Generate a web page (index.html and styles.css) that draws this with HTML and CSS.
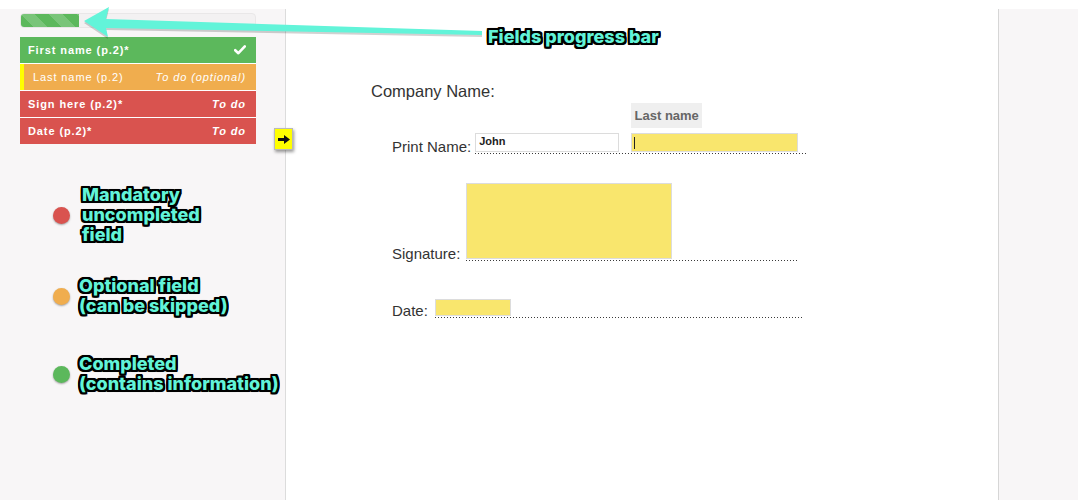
FILE: index.html
```html
<!DOCTYPE html>
<html>
<head>
<meta charset="utf-8">
<link rel="stylesheet" href="styles.css">
</head>
<body>
<div class="app">
  <aside class="sidebar">
    <div class="progress"><div class="progress-fill" style="width:25%"></div></div>
    <ul class="fields">
      <li class="field done">
        <span class="name">First name (p.2)*</span>
        <svg class="check" width="12" height="10" viewBox="0 0 12 10"><path d="M1.2 5.2 L4.4 8.2 L10.8 1.4" fill="none" stroke="#fff" stroke-width="2.6" stroke-linecap="round" stroke-linejoin="round"/></svg>
      </li>
      <li class="field optional current">
        <span class="name">Last name (p.2)</span>
        <span class="status">To do (optional)</span>
      </li>
      <li class="field todo">
        <span class="name">Sign here (p.2)*</span>
        <span class="status">To do</span>
      </li>
      <li class="field todo">
        <span class="name">Date (p.2)*</span>
        <span class="status">To do</span>
      </li>
    </ul>
    <div class="legend">
      <div class="legend-item item-mandatory">
        <span class="dot dot-red"></span>
        <span class="callout-text">Mandatory<br>uncompleted<br>field</span>
      </div>
      <div class="legend-item item-optional">
        <span class="dot dot-orange"></span>
        <span class="callout-text">Optional field<br>(can be skipped)</span>
      </div>
      <div class="legend-item item-completed">
        <span class="dot dot-green"></span>
        <span class="callout-text">Completed<br>(contains information)</span>
      </div>
    </div>
  </aside>
  <main class="document">
    <div class="company">Company Name:</div>
    <div class="doc-row row-print">
      <span class="label">Print Name:</span>
      <div class="line line-print">
        <div class="input filled">John</div>
        <div class="input active">
          <span class="tooltip">Last name</span>
          <span class="cursor"></span>
        </div>
      </div>
    </div>
    <div class="doc-row row-sign">
      <span class="label">Signature:</span>
      <div class="line line-sign">
        <div class="input sign-box"></div>
      </div>
    </div>
    <div class="doc-row row-date">
      <span class="label">Date:</span>
      <div class="line line-date">
        <div class="input date-box"></div>
      </div>
    </div>
  </main>
  <div class="rightpanel"></div>
</div>

<button class="next-btn" aria-label="Next field">
  <svg width="12" height="9" viewBox="0 0 12 9"><rect x="0" y="3" width="6.5" height="3" fill="#111"/><polygon points="6,0 12,4.5 6,9" fill="#111"/></svg>
</button>

<svg class="callout-arrow" width="1078" height="60" viewBox="0 0 1078 60">
  <polygon class="arrow-shadow" points="84,23 109,9 106,21 482,33 482,37 106,30 108,39"/>
  <polygon class="arrow-body" points="84,21 109,7 106,19 482,31 482,35 106,28 108,37"/>
</svg>
<div class="callout-label callout-text">Fields progress bar</div>
</body>
</html>
```

FILE: styles.css
```css
* { box-sizing: border-box; }
html, body { margin: 0; padding: 0; background: #fff; }
body {
  width: 1078px;
  height: 500px;
  overflow: hidden;
  position: relative;
  font-family: "Liberation Sans", Arial, sans-serif;
}
.app {
  display: flex;
  height: 500px;
}
.sidebar {
  width: 286px;
  margin-top: 9px;
  background: #f8f6f7;
  border-right: 1px solid #dcdcdc;
  padding: 4px 29px 0 20px;
}
.document {
  flex: 1;
  background: #fff;
  padding: 82px 0 0 85px;
  color: #333;
}
.rightpanel {
  width: 80px;
  margin-top: 9px;
  background: #f8f6f7;
  border-left: 1px solid #d6d6d6;
}

/* progress */
.progress {
  height: 15px;
  background: #f3f1f2;
  border: 1px solid #e9e7e8;
  border-radius: 4px;
  overflow: hidden;
}
.progress-fill {
  margin: -1px 0 0 -1px;
  height: 15px;
  background-color: #5cb85c;
  background-image: linear-gradient(45deg, rgba(255,255,255,.18) 25%, transparent 25%, transparent 50%, rgba(255,255,255,.18) 50%, rgba(255,255,255,.18) 75%, transparent 75%, transparent);
  background-size: 28px 28px;
}

/* field list */
.fields {
  list-style: none;
  margin: 9px 0 0 0;
  padding: 0;
  display: flex;
  flex-direction: column;
  gap: 1px;
  background: #fff;
}
.field {
  height: 26px;
  display: flex;
  align-items: center;
  justify-content: space-between;
  padding: 0 10px 0 8px;
  color: #fff;
  font-size: 11px;
  font-weight: bold;
  letter-spacing: 0.9px;
}
.field .status { font-style: italic; }
.done { background: #5cb85c; }
.todo { background: #d9534f; }
.optional {
  background: #f0ad4e;
  font-weight: normal;
}
.current {
  border-left: 4px solid #ffff00;
  padding-left: 9px;
}

/* legend */
.legend { display: flex; flex-direction: column; }
.legend-item {
  display: flex;
  align-items: center;
}
.item-mandatory { margin-top: 41px; gap: 12px; }
.item-optional { margin-top: 31px; gap: 9px; }
.item-completed { margin-top: 38px; gap: 9px; }
.dot {
  width: 17px;
  height: 17px;
  border-radius: 50%;
  margin-left: 33px;
  flex: none;
  box-shadow: 0 1px 2px rgba(0,0,0,.35);
}
.dot-red { background: #d9534f; }
.dot-orange { background: #f0ad4e; }
.dot-green { background: #5cb85c; }

.callout-text {
  font-family: Inter, "Noto Sans", sans-serif;
  font-weight: 800;
  font-size: 18px;
  line-height: 20px;
  letter-spacing: 0;
  white-space: nowrap;
  color: #62f4d9;
  text-shadow:
    -2px -2px 0 #000, 0 -2px 0 #000, 2px -2px 0 #000, 2px 0 0 #000,
    2px 2px 0 #000, 0 2px 0 #000, -2px 2px 0 #000, -2px 0 0 #000,
    -1px -2px 0 #000, 1px -2px 0 #000, -1px 2px 0 #000, 1px 2px 0 #000,
    -2px -1px 0 #000, 2px -1px 0 #000, -2px 1px 0 #000, 2px 1px 0 #000,
    0 0 3px #000;
}

/* document */
.company {
  font-size: 16.5px;
  line-height: 19px;
}
.doc-row {
  display: flex;
  align-items: flex-end;
  margin-left: 21px;
}
.label {
  font-size: 15px;
  line-height: 15px;
  white-space: nowrap;
}
.line {
  display: flex;
  align-items: flex-end;
  padding-bottom: 2px;
  background-image: linear-gradient(to right, #3a3a3a 0, #3a3a3a 1.5px, transparent 1.5px);
  background-size: 3px 1.5px;
  background-repeat: repeat-x;
  background-position: left bottom;
}
.row-print { margin-top: 32px; gap: 4px; }
.row-sign { margin-top: 29px; gap: 6px; }
.row-date { margin-top: 38px; gap: 7px; }
.line-print { width: 332px; gap: 12px; }
.line-sign { width: 332px; }
.line-date { width: 368px; }

.input {
  position: relative;
  height: 19px;
  border: 1px solid #dcdcdc;
  background: #f9e66d;
}
.filled {
  width: 144px;
  background: #fff;
  font-size: 11px;
  font-weight: bold;
  color: #222;
  padding: 1px 0 0 3px;
}
.active { width: 167px; }
.cursor {
  position: absolute;
  left: 2px;
  top: 3px;
  width: 1px;
  height: 12px;
  background: #222;
}
.tooltip {
  position: absolute;
  left: -1px;
  bottom: 23px;
  width: 71px;
  height: 25px;
  background: #efefef;
  color: #666;
  font-size: 13px;
  font-weight: bold;
  display: flex;
  align-items: center;
  justify-content: center;
}
.sign-box { width: 206px; height: 76px; }
.date-box { width: 76px; height: 17px; }

/* next-field button */
.next-btn {
  position: absolute;
  left: 274px;
  top: 128px;
  width: 19px;
  height: 22px;
  padding: 0;
  margin: 0;
  background: #ffff00;
  border: 1px solid #b9b9b9;
  box-shadow: 1px 2px 3px rgba(0,0,0,.4);
  display: flex;
  align-items: center;
  justify-content: center;
}

/* callout */
.callout-arrow {
  position: absolute;
  left: 0;
  top: 0;
}
.arrow-body { fill: #62f4d9; }
.arrow-shadow { fill: rgba(0,0,0,.18); }
.callout-label {
  position: absolute;
  left: 488px;
  top: 27px;
}
```
